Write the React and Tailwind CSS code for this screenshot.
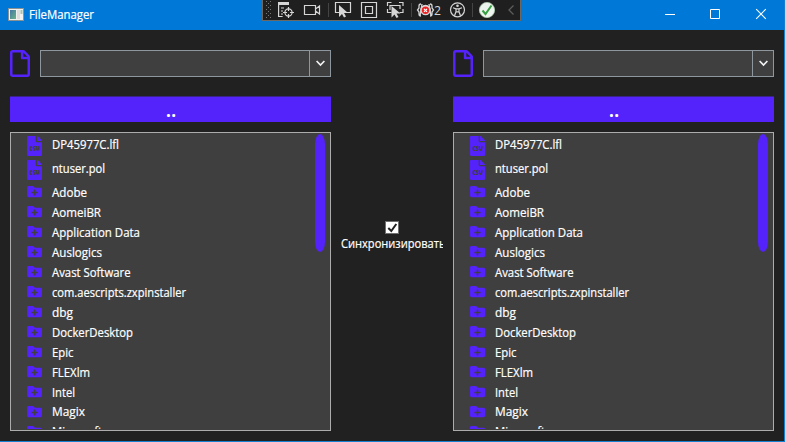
import React from 'react';
import { FaRegFile, FaFileCsv, FaFolderPlus } from 'react-icons/fa';

const entries = [
  { name: 'DP45977C.lfl', file: true, width: 67 },
  { name: 'ntuser.pol', file: true, width: 53 },
  { name: 'Adobe', width: 35 },
  { name: 'AomeiBR', width: 49 },
  { name: 'Application Data', width: 88 },
  { name: 'Auslogics', width: 50 },
  { name: 'Avast Software', width: 78.5 },
  { name: 'com.aescripts.zxpinstaller', width: 134 },
  { name: 'dbg', width: 21 },
  { name: 'DockerDesktop', width: 81 },
  { name: 'Epic', width: 21.5 },
  { name: 'FLEXlm', width: 38 },
  { name: 'Intel', width: 23 },
  { name: 'Magix', width: 33 },
  { name: 'Microsoft', width: 50 },
];

// A line of text condensed or stretched to a known width.
function Label({ text, width, size = 12, baseline = 14.5 }) {
  return (
    <svg width={width + 2} height="20" className="block shrink-0 overflow-visible" fill="#fff" stroke="#fff" strokeWidth="0.2">
      <text x="0" y={baseline} fontSize={size} textLength={width} lengthAdjust="spacingAndGlyphs">
        {text}
      </text>
    </svg>
  );
}

function AppIcon() {
  return (
    <svg width="16" height="14" viewBox="0 0 16 14">
      <defs>
        <linearGradient id="pane" x1="0" y1="0" x2="1" y2="1">
          <stop offset="0" stopColor="#4477a5" />
          <stop offset="1" stopColor="#69b586" />
        </linearGradient>
      </defs>
      <rect x="0.5" y="0.5" width="15" height="12" fill="#f1f1ed" stroke="#8b9294" />
      <rect x="2" y="2" width="6" height="9" fill="url(#pane)" />
      <rect x="9" y="2" width="3" height="9" fill="#dedede" />
      <rect x="12.5" y="2" width="2" height="4" fill="#a3c6b1" />
    </svg>
  );
}

function DebugToolbar() {
  const dots = [];
  for (let r = 0; r < 9; r++) {
    for (let c = 0; c < 3; c++) {
      if ((r + c) % 2 === 0) dots.push(<rect key={`${r}-${c}`} x={3 + c * 2} y={1 + r * 2} width="1" height="1" />);
    }
  }
  return (
    <div className="absolute left-[262px] top-0 h-[21px] w-[259px] border-x border-b border-[#6b6762] bg-[#1f1f1f]">
      <svg width="257" height="20" viewBox="0 0 257 20" fill="none" stroke="#d6d6d6" strokeWidth="1.2">
        <g fill="#777" stroke="none">{dots}</g>
        <path d="M15 2h11v3H15z" fill="#d6d6d6" stroke="none" />
        <path d="M15.6 4v12.5h4M18 8h3M18 11h2M18 14h2" />
        <circle cx="25.5" cy="12.5" r="3.6" />
        <path d="M25.5 7v4M25.5 14v4M20 12.5h4M27 12.5h4" />
        <path d="M41.5 5.5h11v9h-11zM52.500 9l4-3v8l-4-3" />
        <path d="M65.5 3v14M148.500 3v14M209.500 3v14" stroke="#444" strokeWidth="1" />
        <path d="M77 12.5h-4.500v-10h15v10H84" />
        <path d="M76 5v12l3-3 2 3.500 2-1-2-3.500h4z" fill="#d6d6d6" stroke="none" />
        <path d="M98.500 2.500h15v15h-15zM102.500 6.500h7v7h-7z" />
        <path d="M124.500 6V2.500h4M136 2.500h4V6M140 9v3.500h-3.500M128.500 12.500h-4V9M127 10V5.500h10V9" />
        <path d="M128.500 6v11.500l3-3 2 3.500 2-1-2-3.500h4z" fill="#d6d6d6" stroke="none" />
        <circle cx="162.500" cy="10" r="4.700" fill="#e9e9e9" />
        <path d="M158 4q-2 0-2 2v2l-1.500 2 1.500 2v2q0 2 2 2M167 4q2 0 2 2v2l1.500 2-1.500 2v2q0 2-2 2M159 4l-2 12M166 4l2 12" strokeWidth="1.300" />
        <circle cx="162.500" cy="10.300" r="3.700" fill="#ed2222" stroke="none" />
        <path d="M161 8.800l3 3m0-3l-3 3" stroke="#fff" />
        <text x="171" y="15" fill="#d6d6d6" stroke="none" fontSize="13" textLength="7" lengthAdjust="spacingAndGlyphs">2</text>
        <circle cx="194.500" cy="9.800" r="7" />
        <circle cx="194.500" cy="5.700" r="1.300" fill="#d6d6d6" stroke="none" />
        <path d="M190 7.800l3 1h3l3-1M193 8.800v3l-1.500 4M196 8.800v3l1.500 4M193 11.800h3" />
        <circle cx="224" cy="10" r="7.600" fill="#eef5ee" stroke="#b4ceb4" strokeWidth="0.800" />
        <path d="M219.500 10.500l3 3.500 6-8.500" stroke="#38a043" strokeWidth="2" />
        <path d="M250.500 5.500l-4.500 4.500 4.500 4.500" stroke="#5c5c5c" strokeWidth="1.300" />
      </svg>
    </div>
  );
}

function TitleBar() {
  return (
    <header className="flex h-[30px] items-center bg-[#0078d7] pl-2">
      <AppIcon />
      <div className="ml-[4.5px]"><Label text="FileManager" width={65} baseline={14} /></div>
      <svg className="ml-auto mr-[11px]" width="108" height="30" viewBox="0 0 108 30" fill="none" stroke="#fff">
        <path d="M0 14.500h10" />
        <path d="M45.500 9.500h9v9h-9z" />
        <path d="M91.200 9.200l9.600 9.600m0-9.600l-9.600 9.600" strokeWidth="1.100" />
      </svg>
    </header>
  );
}

function Panel() {
  return (
    <section className="flex w-[321px] flex-col">
      <div className="flex h-[27px] items-center gap-[10px]">
        <FaRegFile className="h-[27px] w-5 shrink-0 text-[#5422fb]" preserveAspectRatio="none" />
        <div className="flex h-[27px] flex-1 border border-[#8d979d] bg-[#3f3f3f]">
          <div className="flex-1" />
          <button className="flex w-[21px] items-center justify-center border-l border-[#8d979d]">
            <svg width="9" height="7" viewBox="0 0 9 7" fill="none" stroke="#f2f2f2" strokeWidth="1.700">
              <path d="M0.600 1l3.900 4 3.900-4" />
            </svg>
          </button>
        </div>
      </div>
      <button className="mt-[19px] flex h-[26px] justify-center border-t border-[#3b2489] bg-[#5422fb]">
        <svg width="10" height="25" className="overflow-visible" fill="#fff">
          <text x="0" y="19.500" fontSize="17" fontWeight="700" textLength="10">..</text>
        </svg>
      </button>
      <div className="mt-[10px] flex h-[299px] overflow-hidden border border-[#acacac] bg-[#3f3f3f] py-px">
        <ul className="h-[295px] flex-1 overflow-hidden pl-4">
          {entries.map((e) =>
            e.file ? (
              <li key={e.name} className="flex h-6 items-center gap-[10px]">
                <FaFileCsv className="h-5 w-[15px] shrink-0 text-[#5422fb]" />
                <Label text={e.name} width={e.width} baseline={13} />
              </li>
            ) : (
              <li key={e.name} className="flex h-[19.96px] items-center gap-[10px]">
                <FaFolderPlus className="h-[15px] w-[15px] shrink-0 text-[#5422fb]" />
                <Label text={e.name} width={e.width} />
              </li>
            ),
          )}
        </ul>
        <div className="mr-[5px] h-[118px] w-[10px] rounded-[5px/10px] bg-[#5422fb]" />
      </div>
    </section>
  );
}

export default function App() {
  return (
    <div className="relative flex h-[442px] w-[785px] flex-col overflow-hidden border-b border-r border-[#1580d0] bg-[#212121] font-['Open_Sans','Noto_Sans',sans-serif]">
      <TitleBar />
      <DebugToolbar />
      <main className="flex flex-1 pl-[10px] pt-5">
        <Panel />
        <div className="flex w-[122px] flex-col items-center pt-[171px]">
          <div className="flex h-[13px] w-[14px] items-center justify-center border border-[#707070] bg-white">
            <svg width="11" height="10" viewBox="0 0 11 10" fill="none" stroke="#212121" strokeWidth="2">
              <path d="M1.300 5l3 3 5-7" />
            </svg>
          </div>
          <div className="w-[102px] overflow-hidden">
            <Label text="Синхронизировать" width={104.5} baseline={14} />
          </div>
        </div>
        <Panel />
      </main>
    </div>
  );
}
